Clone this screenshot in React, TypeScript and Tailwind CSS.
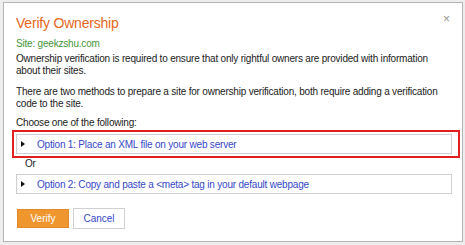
function Caret() {
  return <span className="ml-[4px] mr-[12px] w-0 h-0 border-y-[3.5px] border-y-transparent border-l-[4px] border-l-[#111]" />;
}

export default function App() {
  return (
    <div className="w-[465px] h-[245px] bg-[#ededed] pt-[2px] pl-[3px] font-['Liberation_Sans',Arial,sans-serif]">
      <div className="relative w-[460px] h-[240px] bg-white border border-[#b5b5b5] pl-[12px] pr-[16px]">
        <button className="absolute right-[12px] top-[10px] text-[#999] text-[12px] leading-none">×</button>
        <h1 className="text-[#e5661c] text-[14px] tracking-[-0.2px] leading-[17px] pt-[12px]">Verify Ownership</h1>
        <div className="text-[#45963a] text-[10px] tracking-[-0.2px] leading-[12px] mt-[6px]">Site: geekzshu.com</div>
        <p className="text-[#222] text-[10px] tracking-[-0.2px] leading-[12px] mt-[3px]">
          Ownership verification is required to ensure that only rightful owners are provided with information about their sites.
        </p>
        <p className="text-[#222] text-[10px] tracking-[-0.2px] leading-[12px] mt-[9px]">
          There are two methods to prepare a site for ownership verification, both require adding a verification code to the site.
        </p>
        <div className="text-[#222] text-[10px] tracking-[-0.2px] leading-[12px] mt-[7px]">Choose one of the following:</div>
        <div className="-ml-[4px] mt-[1px] w-[448px] border-2 border-[#e01f1f] pl-[2px] pr-[6px] py-[2px]">
          <div className="flex items-center h-[20px] border border-[#cfcfcf] text-[10px] tracking-[-0.2px] text-[#3548c9]">
            <Caret />
            Option 1: Place an XML file on your web server
          </div>
        </div>
        <div className="text-[#222] text-[10px] tracking-[-0.2px] leading-[12px] ml-[9px]">Or</div>
        <div className="flex items-center w-[436px] h-[20px] mt-[4px] border border-[#cfcfcf] text-[10px] tracking-[-0.2px] text-[#3548c9]">
          <Caret />
          Option 2: Copy and paste a &lt;meta&gt; tag in your default webpage
        </div>
        <div className="flex items-center gap-[4px] mt-[14px] ml-[1px]">
          <button className="w-[52px] h-[19px] bg-[#f0962f] border border-[#e08a2a] text-white text-[10px]">Verify</button>
          <button className="w-[52px] h-[21px] bg-white border border-[#d0d0d0] text-[#3548c9] text-[10px]">Cancel</button>
        </div>
      </div>
    </div>
  );
}
